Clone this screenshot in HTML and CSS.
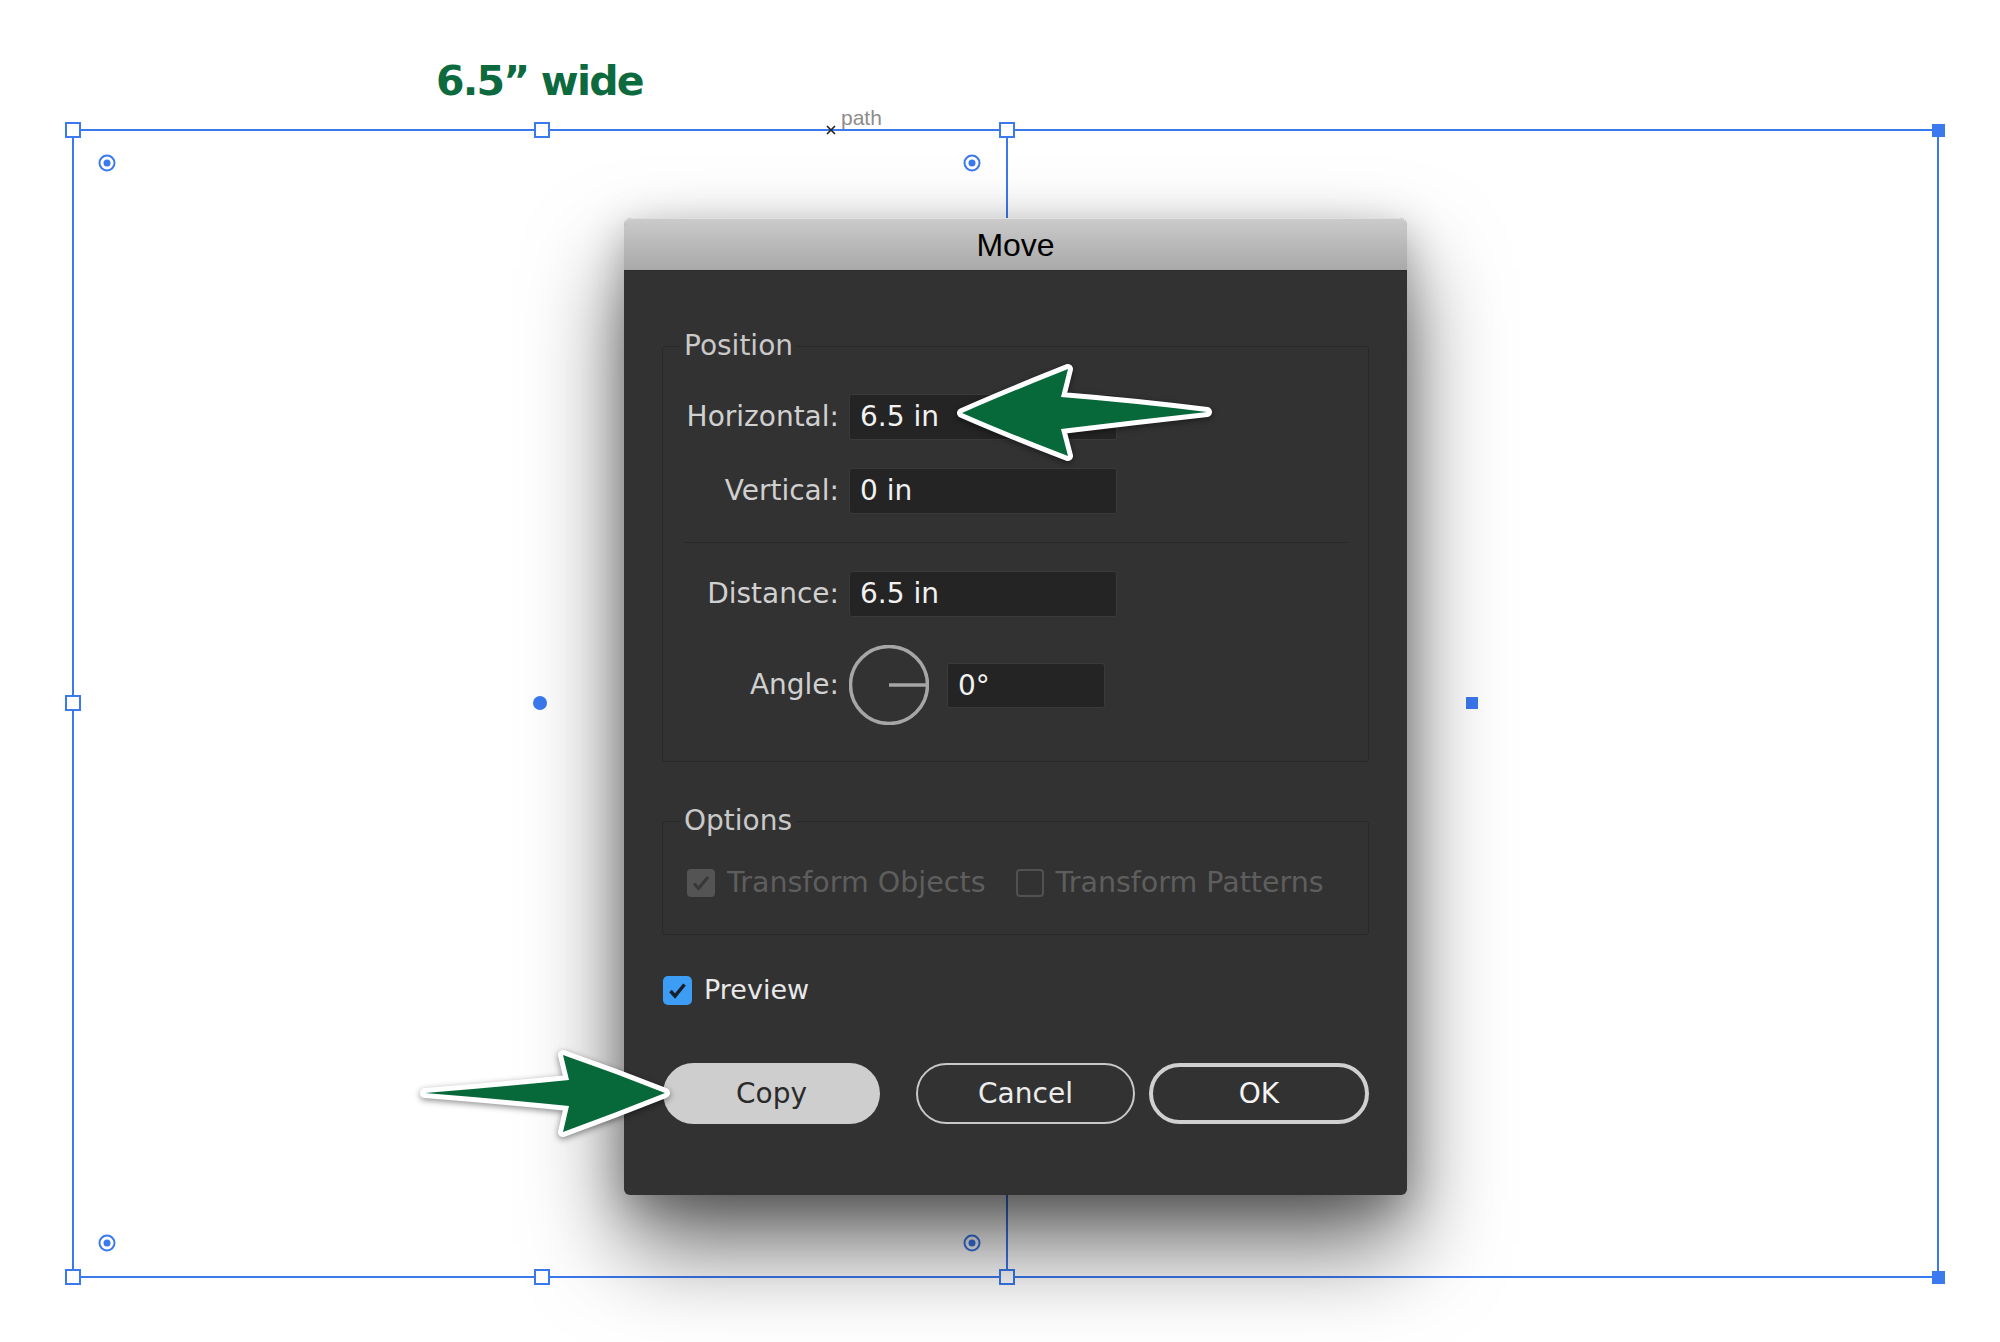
FILE: index.html
```html
<!DOCTYPE html>
<html>
<head>
<meta charset="utf-8">
<title>Move</title>
<link rel="stylesheet" href="styles.css">
</head>
<body>
<div class="canvas">
  <svg class="artwork" width="2000" height="1342" viewBox="0 0 2000 1342">
    <text class="caption" x="436" y="95">6.5” wide</text>
    <text class="path-label" x="841" y="125">path</text>
    <g class="sel-lines">
      <path d="M73 130 H1938 M73 1277 H1938 M73 130 V1277 M1007 130 V1277 M1938 130 V1277"/>
    </g>
    <g class="xmark">
      <path d="M827 126 L835 134 M835 126 L827 134"/>
    </g>
    <g class="handle-open">
      <rect x="66" y="123" width="14" height="14"/>
      <rect x="535" y="123" width="14" height="14"/>
      <rect x="1000" y="123" width="14" height="14"/>
      <rect x="66" y="696" width="14" height="14"/>
      <rect x="66" y="1270" width="14" height="14"/>
      <rect x="535" y="1270" width="14" height="14"/>
      <rect x="1000" y="1270" width="14" height="14"/>
    </g>
    <g class="handle-fill">
      <rect x="1932" y="124" width="13" height="13"/>
      <rect x="1932" y="1271" width="13" height="13"/>
      <rect x="1466" y="697" width="12" height="12"/>
      <circle cx="540" cy="703" r="7"/>
    </g>
    <g class="target">
      <circle class="ring" cx="107" cy="163" r="7.5"/><circle class="pip" cx="107" cy="163" r="3.5"/>
      <circle class="ring" cx="972" cy="163" r="7.5"/><circle class="pip" cx="972" cy="163" r="3.5"/>
      <circle class="ring" cx="107" cy="1243" r="7.5"/><circle class="pip" cx="107" cy="1243" r="3.5"/>
      <circle class="ring" cx="972" cy="1243" r="7.5"/><circle class="pip" cx="972" cy="1243" r="3.5"/>
    </g>
  </svg>

  <section class="dialog">
    <header class="titlebar">Move</header>
    <div class="dialog-body">
      <fieldset class="group group-position">
        <legend>Position</legend>
        <div class="field-grid">
          <label class="lbl">Horizontal:</label>
          <div class="input">6.5 in</div>
          <label class="lbl">Vertical:</label>
          <div class="input">0 in</div>
          <div class="sep"></div>
          <label class="lbl">Distance:</label>
          <div class="input">6.5 in</div>
          <label class="lbl">Angle:</label>
          <div class="angle-cell">
            <svg class="dial" width="80" height="80" viewBox="0 0 80 80">
              <circle cx="40" cy="40" r="38.5"/>
              <path d="M40 40 H78.5"/>
            </svg>
            <div class="input input-sm">0°</div>
          </div>
        </div>
      </fieldset>

      <fieldset class="group group-options">
        <legend>Options</legend>
        <div class="checks">
          <span class="check">
            <span class="box box-dim">
              <svg width="28" height="28" viewBox="0 0 28 28"><path d="M7 14.5 L11.5 19.5 L21 8"/></svg>
            </span>Transform Objects
          </span>
          <span class="check">
            <span class="box box-empty"></span>Transform Patterns
          </span>
        </div>
      </fieldset>

      <div class="preview">
        <span class="box box-blue">
          <svg width="29" height="29" viewBox="0 0 29 29"><path d="M7.5 15 L12 20 L21.5 8.5"/></svg>
        </span>Preview
      </div>

      <div class="buttons">
        <button class="btn btn-copy">Copy</button>
        <div class="btn-group">
          <button class="btn btn-cancel">Cancel</button>
          <button class="btn btn-ok">OK</button>
        </div>
      </div>
    </div>
  </section>

  <svg class="arrows" width="2000" height="1342" viewBox="0 0 2000 1342">
    <path class="arrow" d="M962 413 Q1010 392 1068 369 L1061 397 Q1135 403 1207 412 Q1135 420 1061 429 L1068 456 Q1010 434 962 413 Z"/>
    <path class="arrow" d="M665 1093 Q615 1073 563 1055 L569 1080 Q500 1087 425 1093 Q500 1099 569 1106 L563 1132 Q615 1113 665 1093 Z"/>
  </svg>
</div>
</body>
</html>
```

FILE: styles.css
```css
* { box-sizing: border-box; }

html, body {
  margin: 0;
  padding: 0;
}

body {
  width: 2000px;
  height: 1342px;
  overflow: hidden;
  background: #ffffff;
  font-family: "DejaVu Sans", sans-serif;
}

.canvas {
  position: relative;
  width: 2000px;
  height: 1342px;
  background: #ffffff;
}

.artwork,
.arrows {
  position: absolute;
  left: 0;
  top: 0;
  display: block;
}

.arrows {
  z-index: 3;
  pointer-events: none;
}

.caption {
  font-family: "DejaVu Sans", sans-serif;
  font-weight: bold;
  font-size: 41px;
  letter-spacing: -1.8px;
  fill: #0d6a3f;
}

.path-label {
  font-family: "Liberation Sans", Arial, sans-serif;
  font-size: 21px;
  fill: #8c8c8c;
}

.sel-lines path {
  fill: none;
  stroke: #3b79ef;
  stroke-width: 2;
}

.xmark path {
  fill: none;
  stroke: #1e1e1e;
  stroke-width: 1.6;
}

.handle-open rect {
  fill: #ffffff;
  stroke: #3b79ef;
  stroke-width: 2;
}

.handle-fill rect,
.handle-fill circle {
  fill: #3b79ef;
}

.target .ring {
  fill: #ffffff;
  stroke: #3b79ef;
  stroke-width: 2;
}

.target .pip {
  fill: #3b79ef;
}

.arrow {
  fill: #07683a;
  stroke: #ffffff;
  stroke-width: 10;
  stroke-linejoin: round;
  paint-order: stroke;
  filter: drop-shadow(0 2px 3px rgba(0, 0, 0, 0.45));
}

/* Dialog */
.dialog {
  position: absolute;
  left: 624px;
  top: 218px;
  width: 783px;
  height: 977px;
  z-index: 2;
  display: flex;
  flex-direction: column;
  background: #323232;
  border-radius: 8px 8px 6px 6px;
  box-shadow: 0 50px 95px rgba(0, 0, 0, 0.6), 0 12px 40px rgba(0, 0, 0, 0.25);
}

.titlebar {
  height: 53px;
  line-height: 55px;
  text-align: center;
  font-family: "Liberation Sans", Arial, sans-serif;
  font-size: 32px;
  color: #000000;
  background: linear-gradient(#cbcbcb, #a9a9a9);
  border-radius: 8px 8px 0 0;
  border-bottom: 1px solid #2a2a2a;
  box-shadow: inset 0 1px 0 #dedede;
}

.dialog-body {
  flex: 1;
  display: flex;
  flex-direction: column;
  padding: 58px 38px 0;
}

.group {
  margin: 0;
  padding: 31px 21px 36px;
  border: 1px solid #282828;
  border-radius: 3px;
  min-width: 0;
}

.group legend {
  padding: 0 4px;
  margin-left: -4px;
  font-size: 28px;
  line-height: 34px;
  color: #c9c9c9;
}

.field-grid {
  display: grid;
  grid-template-columns: 155px 1fr;
  column-gap: 10px;
  row-gap: 28px;
  align-items: center;
}

.lbl {
  text-align: right;
  font-size: 28px;
  line-height: 34px;
  color: #d0d0d0;
  white-space: nowrap;
}

.input {
  justify-self: start;
  width: 268px;
  height: 46px;
  padding-left: 10px;
  line-height: 44px;
  font-size: 28px;
  color: #f2f2f2;
  background: #242424;
  border: 1px solid #3a3a3a;
  border-radius: 3px;
  white-space: nowrap;
}

.input-sm {
  width: 158px;
  height: 45px;
  line-height: 43px;
}

.sep {
  grid-column: 1 / -1;
  height: 1px;
  background: #282828;
}

.angle-cell {
  display: flex;
  align-items: center;
  gap: 18px;
}

.dial {
  display: block;
}

.dial circle,
.dial path {
  fill: none;
  stroke: #a6a6a6;
  stroke-width: 3.5;
}

.group-options {
  margin-top: 42px;
  padding: 28px 21px 34px;
}

.checks {
  display: flex;
  align-items: center;
  gap: 30px;
  padding-left: 3px;
  height: 34px;
}

.check {
  display: flex;
  align-items: center;
  gap: 12px;
  font-size: 28.5px;
  line-height: 34px;
  color: #5e5e5e;
  white-space: nowrap;
}

.box {
  display: block;
  width: 28px;
  height: 28px;
  border-radius: 4px;
  flex: none;
}

.box svg {
  display: block;
}

.box-dim {
  background: #545454;
}

.box-dim path {
  fill: none;
  stroke: #383838;
  stroke-width: 3;
}

.box-empty {
  border: 2px solid #515151;
}

.preview {
  margin-top: 38px;
  display: flex;
  align-items: center;
  gap: 12px;
  padding-left: 1px;
  font-size: 27px;
  line-height: 34px;
  color: #e9e9e9;
}

.box-blue {
  width: 29px;
  height: 29px;
  background: #3d9cf4;
  border-radius: 5px;
}

.box-blue path {
  fill: none;
  stroke: #15202c;
  stroke-width: 3.5;
}

.buttons {
  margin-top: 56px;
  display: flex;
  justify-content: space-between;
  align-items: center;
}

.btn-group {
  display: flex;
  gap: 14px;
}

.btn {
  height: 61px;
  border-radius: 31px;
  font-family: "DejaVu Sans", sans-serif;
  font-size: 28px;
  padding: 0;
  margin: 0;
}

.btn-copy {
  width: 217px;
  margin-left: 1px;
  background: #cecece;
  border: none;
  color: #2a2a2a;
}

.btn-cancel {
  width: 219px;
  background: transparent;
  border: 2.5px solid #c8c8c8;
  color: #ececec;
}

.btn-ok {
  width: 220px;
  background: transparent;
  border: 4px solid #d0d0d0;
  color: #f4f4f4;
}
```
